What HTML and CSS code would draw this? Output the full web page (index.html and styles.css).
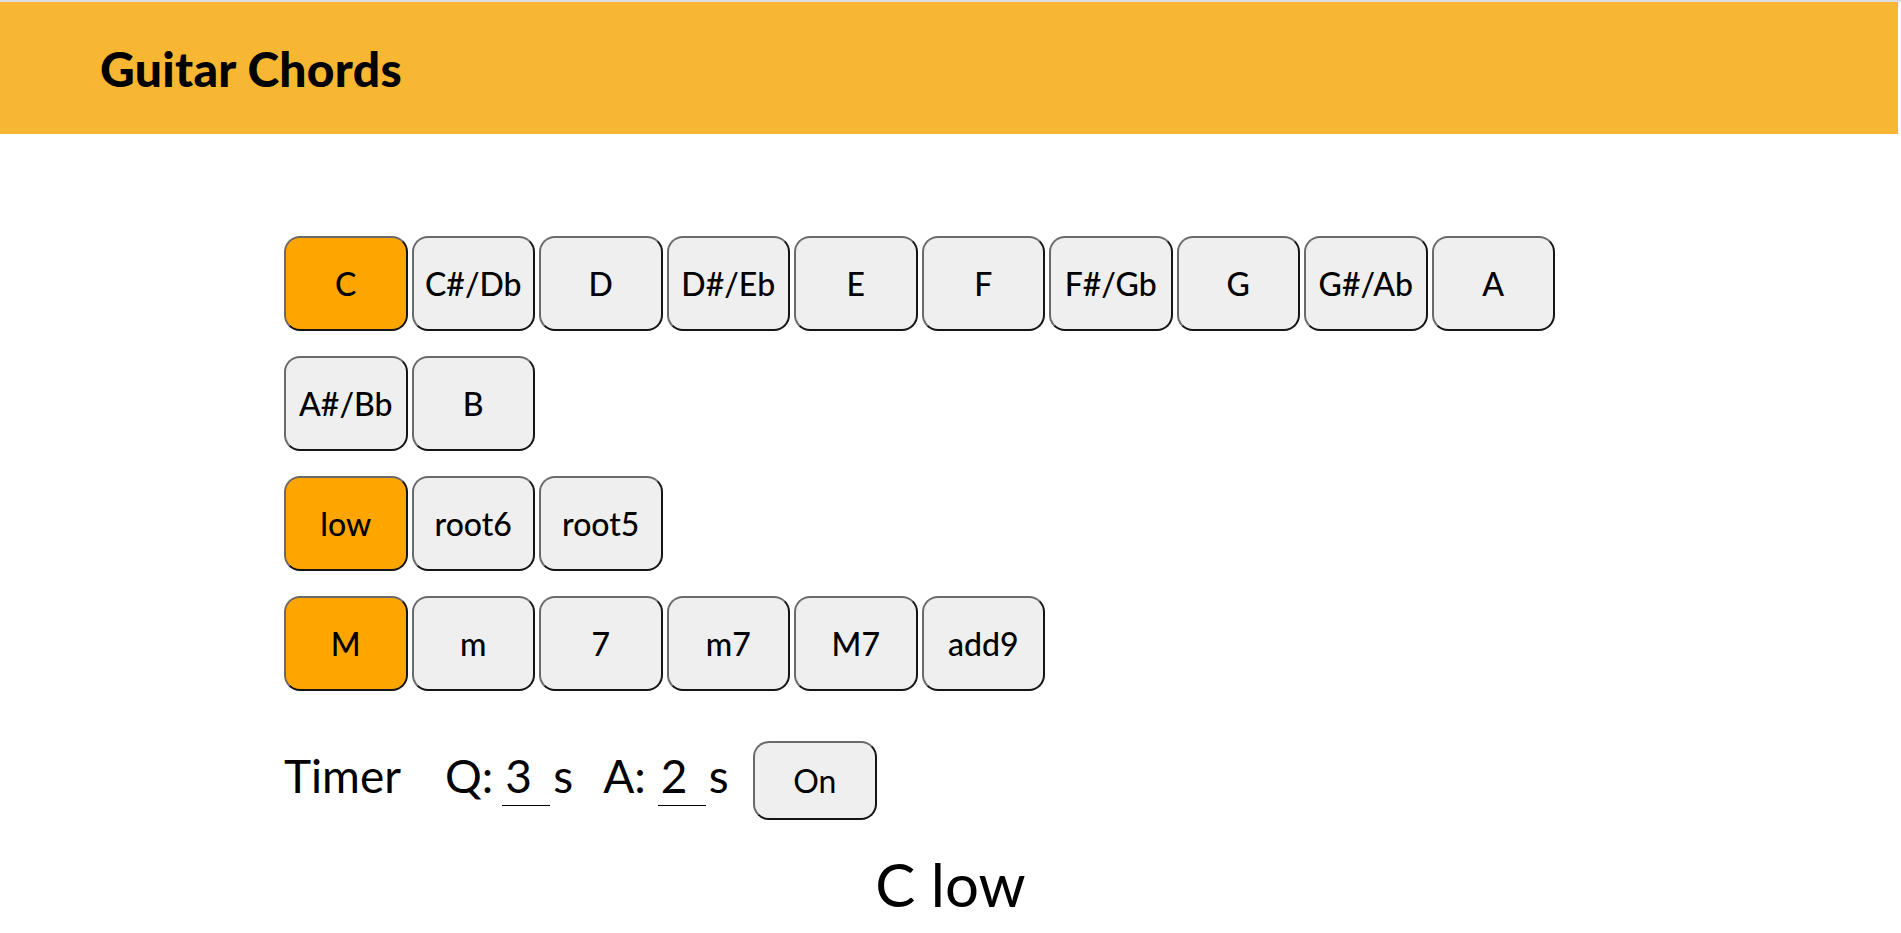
FILE: index.html
```html
<!DOCTYPE html>
<html lang="en">
<head>
<meta charset="utf-8">
<title>Guitar Chords</title>
<link rel="stylesheet" href="styles.css">
</head>
<body>
<header class="topbar">
  <h1 class="title">Guitar Chords</h1>
</header>
<main class="main">
  <div class="group">
    <button class="key selected">C</button>
    <button class="key">C#/Db</button>
    <button class="key">D</button>
    <button class="key">D#/Eb</button>
    <button class="key">E</button>
    <button class="key">F</button>
    <button class="key">F#/Gb</button>
    <button class="key">G</button>
    <button class="key">G#/Ab</button>
    <button class="key">A</button>
    <button class="key">A#/Bb</button>
    <button class="key">B</button>
  </div>
  <div class="group">
    <button class="key selected">low</button>
    <button class="key">root6</button>
    <button class="key">root5</button>
  </div>
  <div class="group">
    <button class="key selected">M</button>
    <button class="key">m</button>
    <button class="key">7</button>
    <button class="key">m7</button>
    <button class="key">M7</button>
    <button class="key">add9</button>
  </div>
  <div class="timer">
    <span class="timer-label">Timer</span>
    <span class="field">Q:</span>
    <input class="num" type="text" value="3">
    <span class="unit">s</span>
    <span class="field field-a">A:</span>
    <input class="num" type="text" value="2">
    <span class="unit unit-last">s</span>
    <button class="toggle">On</button>
  </div>
</main>
<div class="answer">C low</div>
</body>
</html>
```

FILE: styles.css
```css
html, body {
  margin: 0;
  padding: 0;
  background: #ffffff;
}

body {
  font-family: Lato, "Noto Sans", sans-serif;
  color: #000;
  border-top: 2px solid #dedede;
}

.topbar {
  height: 132px;
  background: #f7b733;
  display: flex;
  align-items: center;
  padding-left: 100px;
  margin-right: 3px;
}

.title {
  margin: 0;
  font-size: 48px;
  font-weight: 900;
  letter-spacing: 0.3px;
}

.main {
  padding: 102px 285px 0 284px;
}

.group {
  display: flex;
  flex-wrap: wrap;
  column-gap: 4px;
  row-gap: 25px;
  margin-bottom: 25px;
}

.key {
  width: 123.5px;
  height: 95px;
  box-sizing: border-box;
  border: 2px outset #6a6a6a;
  border-radius: 16px;
  background: #efefef;
  font-family: Lato, "Noto Sans", sans-serif;
  font-size: 32px;
  font-weight: 500;
  color: #000;
  padding: 0;
}

.key.selected {
  background: #ffa500;
}

.timer {
  display: flex;
  align-items: baseline;
  margin-top: 50px;
  font-size: 46px;
  height: 79px;
}

.timer-label {
  margin-right: 44px;
}

.field {
  margin-right: 9px;
}

.field-a {
  margin-right: 12px;
}

.num {
  width: 48px;
  box-sizing: border-box;
  border: none;
  border-bottom: 1px solid #000;
  font-family: Lato, "Noto Sans", sans-serif;
  font-size: 46px;
  line-height: 1;
  padding: 0 0 2px 3px;
  margin: 0;
  background: transparent;
  outline: none;
  color: #000;
}

.unit {
  margin-left: 3px;
  margin-right: 30px;
}

.unit-last {
  margin-right: 24px;
}

.toggle {
  width: 124px;
  height: 79px;
  box-sizing: border-box;
  border: 2px outset #6a6a6a;
  border-radius: 16px;
  background: #efefef;
  font-family: Lato, "Noto Sans", sans-serif;
  font-size: 32px;
  color: #000;
  padding: 0;
}

.answer {
  text-align: center;
  font-size: 60px;
  margin-top: 28px;
  line-height: 1.2;
}
```
